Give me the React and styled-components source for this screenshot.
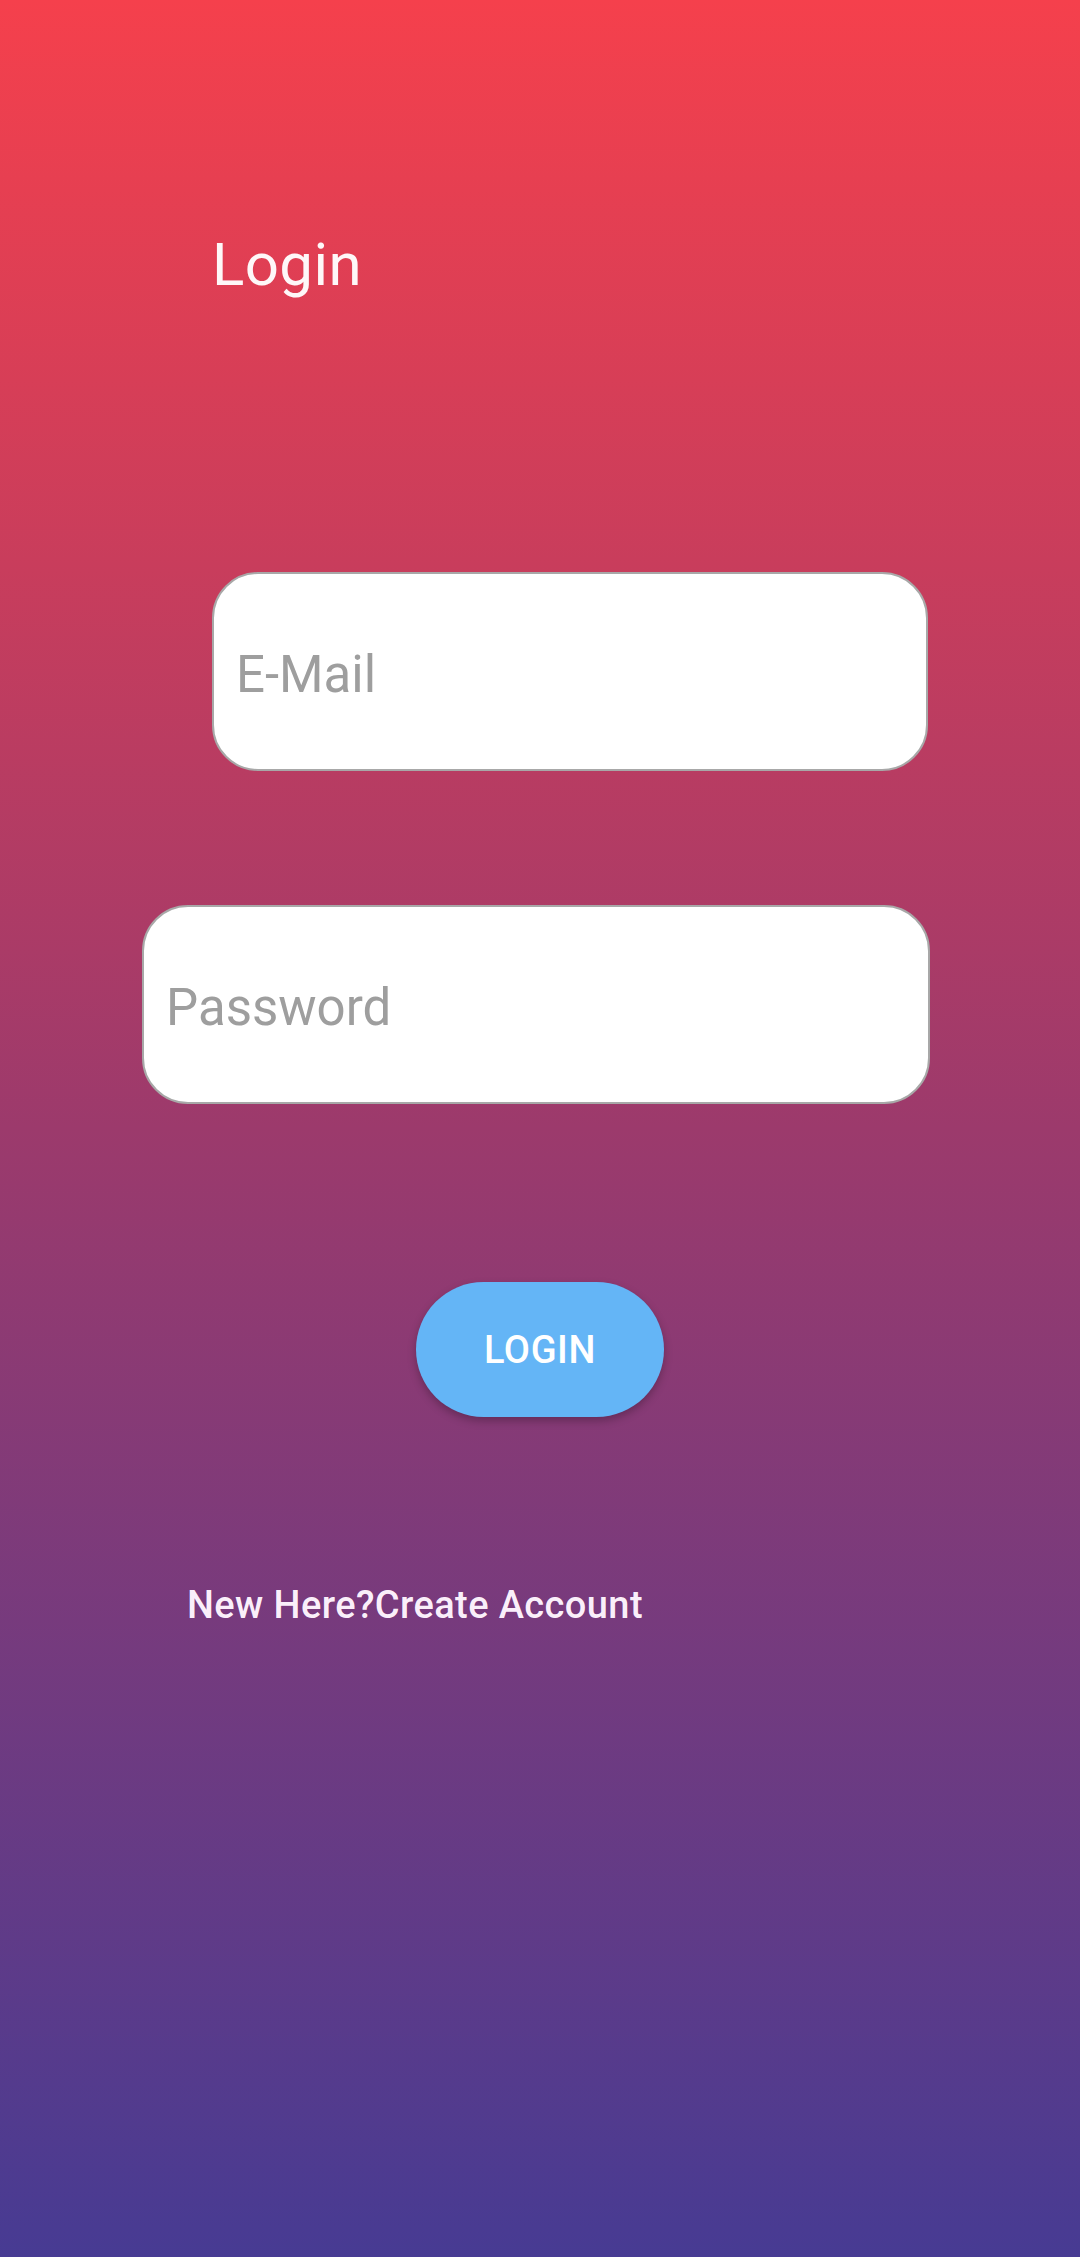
import React from 'react'
import styled, {createGlobalStyle} from 'styled-components'

const GlobalStyle = createGlobalStyle`
  html, body {
    margin: 0;
    padding: 0;
  }
  body {
    font-family: Roboto, 'Noto Sans', sans-serif;
  }
`

const Screen = styled.main`
  min-height: 2257px;
  box-sizing: border-box;
  display: flex;
  flex-direction: column;
  background: linear-gradient(180deg, #f5404c 0%, #9c3a6c 50%, #473b93 100%);
`

const Title = styled.h1`
  margin: 235px 0 0 212px;
  font-size: 60px;
  line-height: 60px;
  font-weight: 400;
  letter-spacing: 0.4px;
  color: rgba(255, 255, 255, 0.96);
`

const Field = styled.input`
  box-sizing: border-box;
  height: 199px;
  margin-top: ${p => p.$top}px;
  margin-left: ${p => p.$left}px;
  width: ${p => p.$width}px;
  padding: 5px 0 0 22px;
  border: 2px solid #a8a8a8;
  border-radius: 46px;
  background: #fff;
  font-family: Roboto, sans-serif;
  font-size: 51px;
  color: #333;
  outline: none;

  &::placeholder {
    color: #9e9e9e;
  }
`

const LoginButton = styled.button`
  align-self: center;
  margin-top: 178px;
  width: 248px;
  height: 135px;
  border: none;
  border-radius: 68px;
  background: #64b5f6;
  color: #fff;
  font-family: Roboto, sans-serif;
  font-size: 38px;
  font-weight: 500;
  letter-spacing: 0.6px;
  text-transform: uppercase;
  box-shadow: 0 4px 8px rgba(0, 0, 0, 0.25);
  cursor: pointer;
`

const SignupLink = styled.a`
  margin: 169px 0 0 187px;
  font-size: 38px;
  line-height: 38px;
  font-weight: 500;
  letter-spacing: 0.4px;
  color: rgba(255, 245, 255, 0.97);
  text-decoration: none;
`

const App = () => (
  <React.Fragment>
    <GlobalStyle />
    <Screen>
      <Title>Login</Title>
      <Field $top={277} $left={212} $width={716} type="email" placeholder="E-Mail" />
      <Field $top={134} $left={142} $width={788} type="password" placeholder="Password" />
      <LoginButton>Login</LoginButton>
      <SignupLink href="#">New Here?Create Account</SignupLink>
    </Screen>
  </React.Fragment>
)

export default App
